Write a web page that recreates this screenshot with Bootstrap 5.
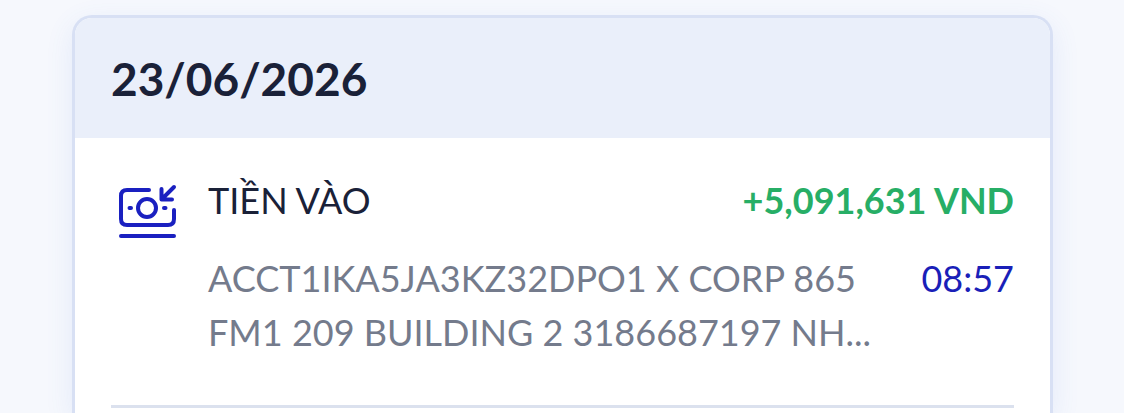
<!DOCTYPE html>
<html lang="vi">
<head>
<meta charset="utf-8">
<meta name="viewport" content="width=device-width, initial-scale=1">
<title>Lịch sử giao dịch</title>
<link href="https://cdn.jsdelivr.net/npm/bootstrap@5.3.0/dist/css/bootstrap.min.css" rel="stylesheet">
<style>
  body { background: #f6f8fd; font-family: Lato, "Noto Sans", sans-serif; color: #1a2138; }
  .history { padding: 15px 71px 0 72px; }
  .day-card { border: 3px solid #d8e0f4; border-bottom: 0; border-radius: 20px 20px 0 0; box-shadow: 0 8px 28px rgba(70, 115, 220, .11); color: inherit; }
  .day-head { background: #eaeffa; border: 0; border-radius: 17px 17px 0 0 !important; padding: 33px 36px 31px; }
  .day-head h2 { font-size: 46px; line-height: 56px; font-weight: 700; }
  .day-body { padding: 0 36px; }
  .entry { gap: 25px; padding: 35px 0 46px; border-bottom: 3px solid #dbe1ee; font-size: 36px; line-height: 54px; }
  .entry-icon { width: 72px; height: 72px; }
  .entry-lines { gap: 24px; }
  .amount { color: #27ae66; font-weight: 700; }
  .memo { color: #747b8c; }
  .clock { color: #1a1fb8; }
</style>
</head>
<body>
<main class="history vh-100 d-flex flex-column overflow-hidden">
  <section class="card day-card flex-fill">
    <header class="card-header day-head"><h2 class="mb-0">23/06/2026</h2></header>
    <div class="card-body day-body">
      <article class="entry d-flex align-items-start">
        <svg class="entry-icon flex-shrink-0" viewBox="0 0 72 72" fill="none" stroke="#1a20c0" stroke-width="4" stroke-linecap="round" stroke-linejoin="round" aria-hidden="true">
          <path d="M38 17H16Q10 17 10 23V46Q10 52 16 52H57Q63 52 63 46V37"/>
          <circle cx="36" cy="35" r="9"/>
          <path d="M18.500 35H20M53 35H54.500M10 63H63M63 14L51 26M50.500 16V26.500H61"/>
        </svg>
        <div class="entry-lines d-flex flex-column flex-fill">
          <div class="d-flex justify-content-between">
            <span>TIỀN VÀO</span>
            <span class="amount text-nowrap">+5,091,631 VND</span>
          </div>
          <div class="d-flex justify-content-between align-items-start gap-4">
            <p class="memo mb-0">ACCT1IKA5JA3KZ32DPO1 X CORP 865 FM1 209 BUILDING 2 3186687197 NH...</p>
            <time class="clock" datetime="2026-06-23T08:57">08:57</time>
          </div>
        </div>
      </article>
    </div>
  </section>
</main>
<script src="https://cdn.jsdelivr.net/npm/bootstrap@5.3.0/dist/js/bootstrap.bundle.min.js"></script>
</body>
</html>
